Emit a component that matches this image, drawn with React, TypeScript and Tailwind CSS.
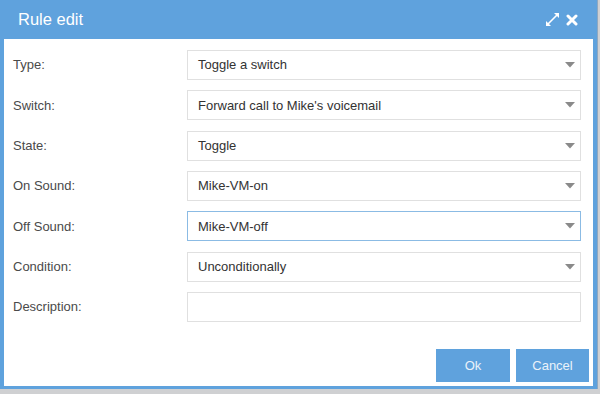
import React from "react";

const rows = [
  { label: "Type:", value: "Toggle a switch", select: true },
  { label: "Switch:", value: "Forward call to Mike's voicemail", select: true },
  { label: "State:", value: "Toggle", select: true },
  { label: "On Sound:", value: "Mike-VM-on", select: true },
  { label: "Off Sound:", value: "Mike-VM-off", select: true, focused: true },
  { label: "Condition:", value: "Unconditionally", select: true },
  { label: "Description:", value: "", select: false },
];

function Caret() {
  return (
    <svg width="10" height="6" viewBox="0 0 10 6" className="shrink-0">
      <path d="M0 0 H10 L5 5.5 Z" fill="#8a8a8a" />
    </svg>
  );
}

function ExpandIcon() {
  return (
    <svg width="15" height="15" viewBox="0 0 15 15" fill="none" stroke="#ffffff">
      <path d="M3 12 L12 3" strokeWidth="1.6" />
      <path d="M9 1 L14 1 L14 6 Z" fill="#ffffff" stroke="none" />
      <path d="M1 9 L1 14 L6 14 Z" fill="#ffffff" stroke="none" />
    </svg>
  );
}

function CloseIcon() {
  return (
    <svg width="12" height="12" viewBox="0 0 12 12" stroke="#ffffff" strokeWidth="3" strokeLinecap="round">
      <path d="M2 2 L10 10 M10 2 L2 10" />
    </svg>
  );
}

export default function App() {
  return (
    <div
      className="w-[600px] h-[394px] bg-[#cfd0d2] overflow-hidden"
      style={{ fontFamily: '"Liberation Sans", Arial, sans-serif' }}
    >
      <div className="w-[598px] h-[389px] bg-[#5fa2dd] flex flex-col px-[4px] pb-[3px] border-r border-[#8fa8c0]">
        {/* Header */}
        <div className="h-[39px] -mx-[4px] flex items-center pl-[18px] pr-[19px] shrink-0">
          <span className="text-[16.5px] text-white">Rule edit</span>
          <div className="ml-auto flex items-center gap-[6px]">
            <ExpandIcon />
            <CloseIcon />
          </div>
        </div>

        {/* Body */}
        <div className="flex-1 bg-white flex flex-col pt-[11px] pl-[9px] pr-[12px] pb-[4px]">
          <div className="flex flex-col gap-[10.33px]">
            {rows.map((r) => (
              <div key={r.label} className="flex items-center h-[30px]">
                <span className="w-[174px] text-[13px] text-[#4a4a4a]">{r.label}</span>
                <div
                  className={
                    "flex-1 h-[30px] flex items-center pl-[10px] pr-[5px] bg-white border " +
                    (r.focused ? "border-[#8bbbe4]" : "border-[#e0e0e0]")
                  }
                >
                  <span className="text-[13px] text-[#333333]">{r.value}</span>
                  {r.select && (
                    <span className="ml-auto">
                      <Caret />
                    </span>
                  )}
                </div>
              </div>
            ))}
          </div>

          <div className="mt-auto flex justify-end gap-[6px] mr-[-8px]">
            <button className="w-[74px] h-[33px] bg-[#5fa2dd] text-[13px] text-[#eaf2fa]">Ok</button>
            <button className="w-[73px] h-[33px] bg-[#5fa2dd] text-[13px] text-[#eaf2fa]">Cancel</button>
          </div>
        </div>
      </div>
    </div>
  );
}
